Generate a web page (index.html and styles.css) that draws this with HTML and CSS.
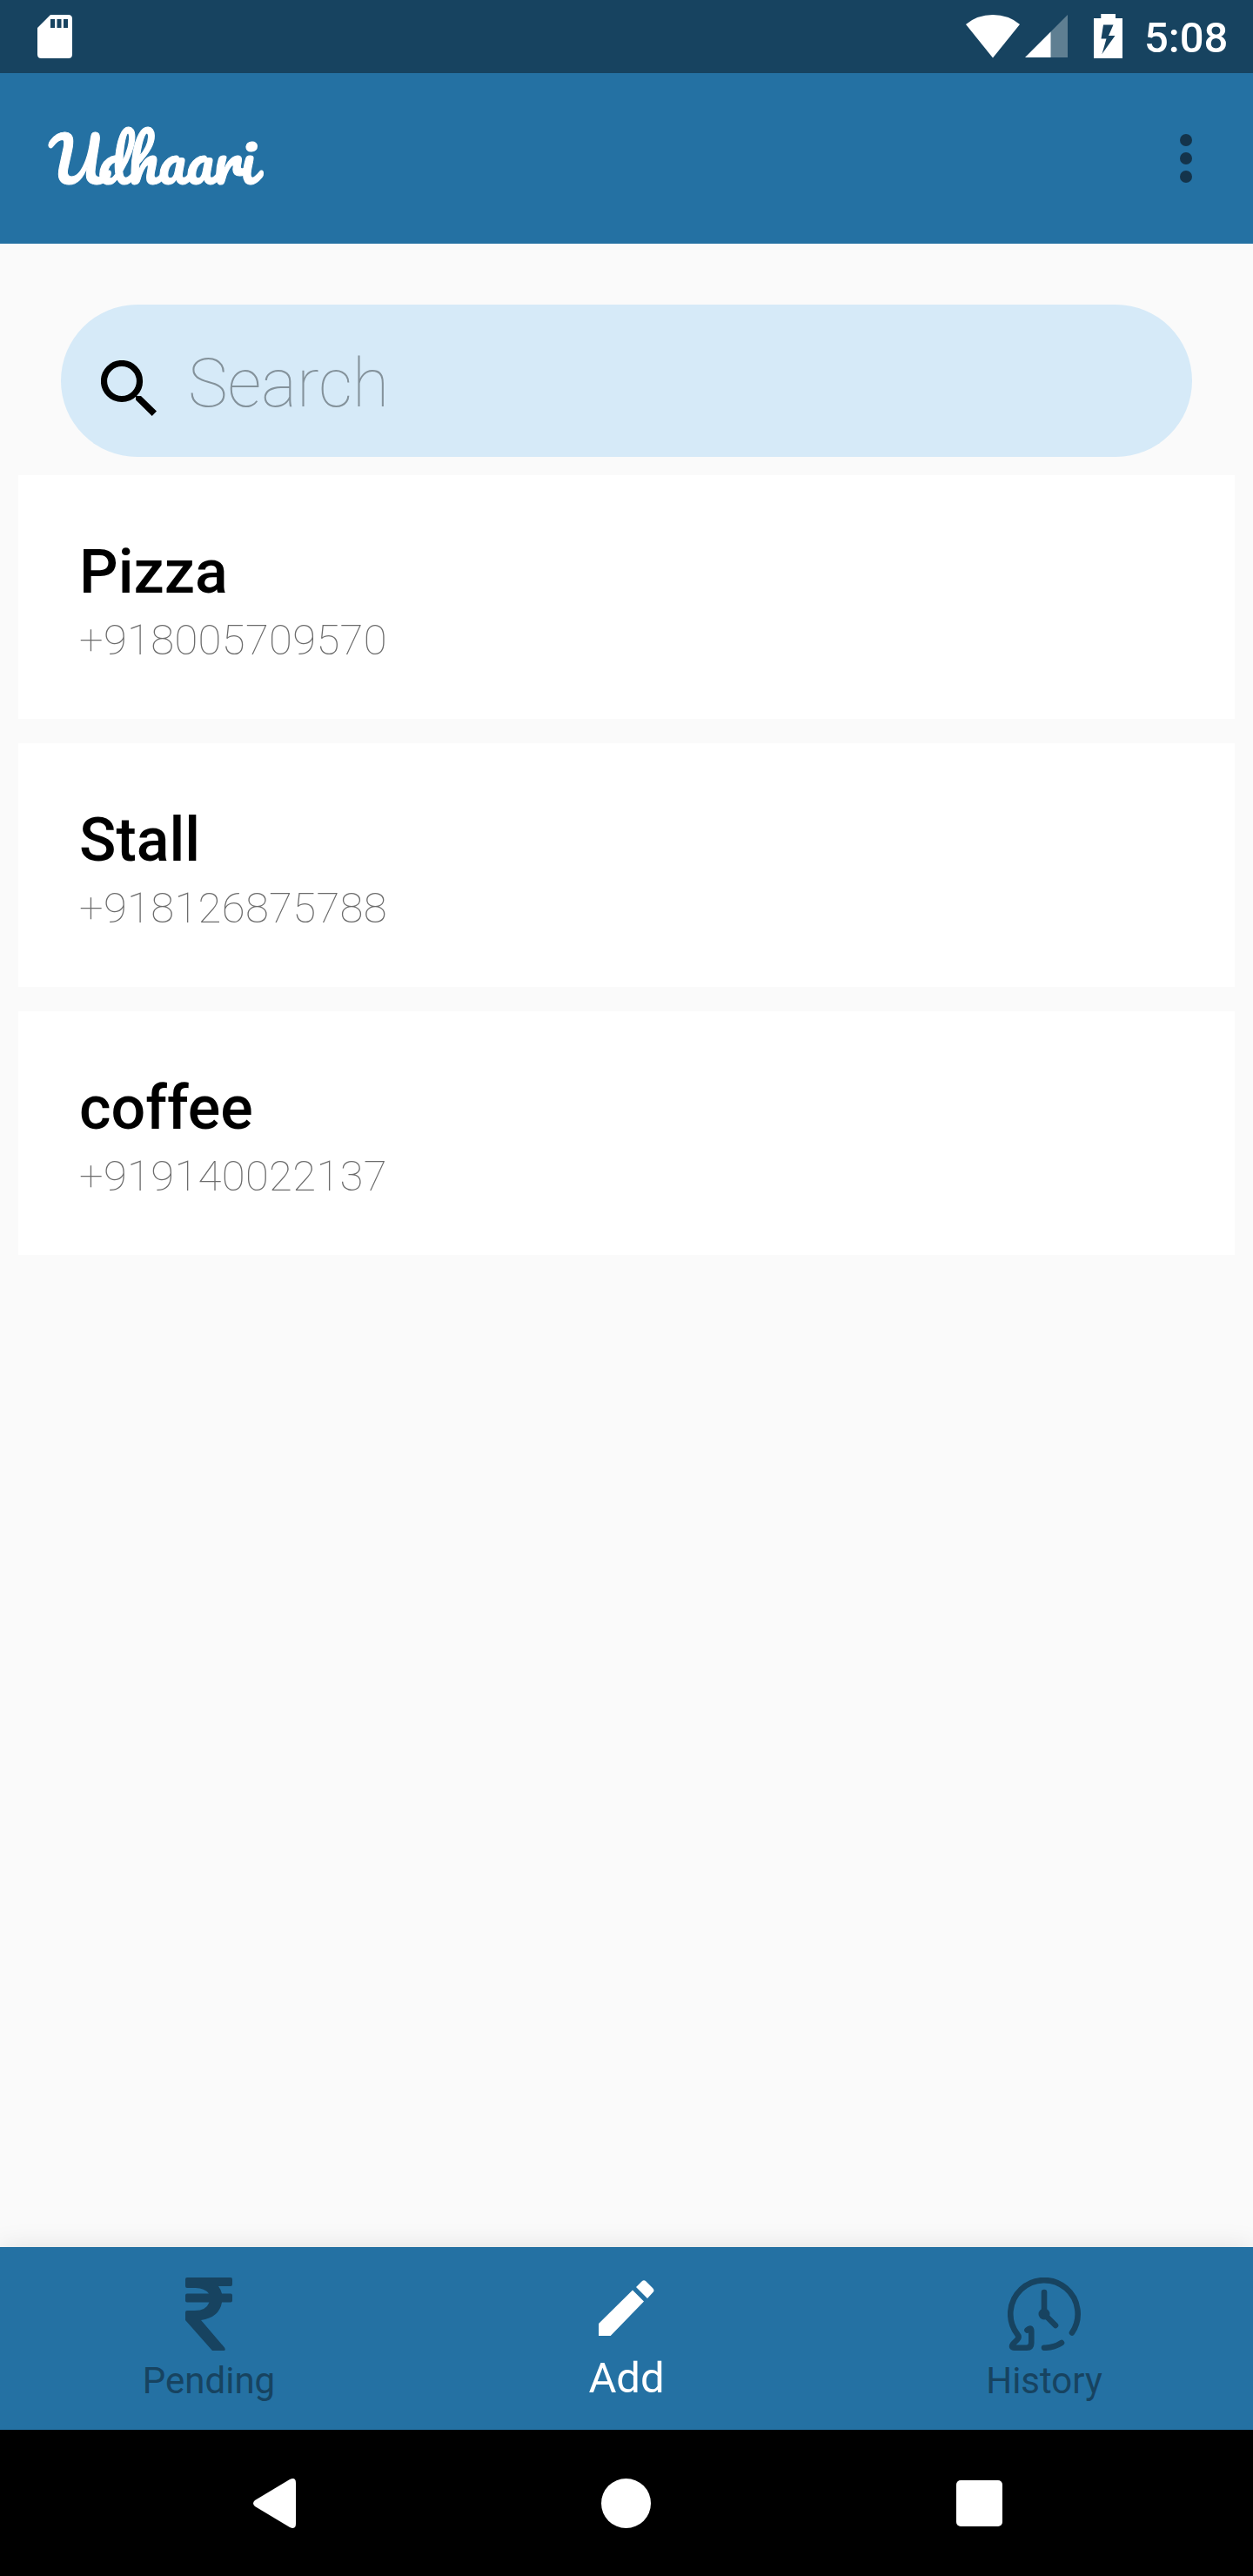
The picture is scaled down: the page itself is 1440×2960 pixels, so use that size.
FILE: index.html
```html
<!DOCTYPE html>
<html lang="en">
<head>
<meta charset="utf-8">
<title>Udhaari</title>
<link rel="stylesheet" href="styles.css">
</head>
<body>
<div class="status">
  <svg class="sd" width="40" height="50" viewBox="0 0 40 50"><path fill="#fff" fill-rule="evenodd" d="M15 0H35.500Q40 0 40 4.500V45.500Q40 50 35.500 50H4.500Q0 50 0 45.500V15ZM15 5V15H20V5ZM22.500 5V15H27.500V5ZM30 5V15H35V5Z"/></svg>
  <svg class="wifi" width="62" height="50" viewBox="0 0 62 50"><path fill="#fff" d="M0 11Q13 0 31 0T62 11L31 49.500Z"/></svg>
  <svg class="signal" width="49" height="49" viewBox="0 0 49 49"><path fill="#5f7f92" d="M49 0V49H29V20Z"/><path fill="#fff" d="M29.500 19.500V49H0Z"/></svg>
  <svg class="battery" width="33" height="51" viewBox="0 0 33 51"><path fill="#fff" fill-rule="evenodd" d="M8.300 0H25V5H33V51H0V5H8.300ZM11 12.500L8.500 28.500H14.500L9.500 46L24.500 25H17L22.500 12.500Z"/></svg>
  <span class="time">5:08</span>
</div>
<header class="appbar">
  <h1 class="brand"><span>U</span>dhaari</h1>
  <div class="more"><i></i><i></i><i></i></div>
</header>
<main>
  <div class="search">
    <svg width="64" height="64" viewBox="0 0 64 64"><circle cx="24" cy="24" r="20.500" fill="none" stroke="#000" stroke-width="7.200"/><path d="M40 41H46L64 58.500L58.700 64L40 45.500Z"/></svg>
    <span>Search</span>
  </div>
  <section class="card"><h2>Pizza</h2><p>+918005709570</p></section>
  <section class="card"><h2>Stall</h2><p>+918126875788</p></section>
  <section class="card"><h2>coffee</h2><p>+919140022137</p></section>
</main>
<nav class="tabs">
  <div class="tab">
    <svg width="54" height="84" viewBox="0 0 54 84"><path fill="#174360" d="M2 0H52Q54 0 54 2V8Q54 10 52 10H38Q41 14 42 18.500H52Q54 18.500 54 20.500V26.500Q54 28.500 52 28.500H42Q39 46 18 49L45 80.500Q47 84 44 84H31L0 49V40Q0 38 2 38H11Q24 38 27.500 28.500H2Q0 28.500 0 26.500V20.500Q0 18.500 2 18.500H27Q22 12 12 12H2Q0 12 0 10V2Q0 0 2 0Z"/></svg>
    <span>Pending</span>
  </div>
  <div class="tab active">
    <svg width="64" height="64" viewBox="0 0 64 64"><path fill="#fff" d="M0 50L39 11.500L52 24.500L13.700 64H0ZM43 8L49 2Q51.500 -1 54.500 1.500L62 9Q65 12 62 14.500L56 21Z"/></svg>
    <span>Add</span>
  </div>
  <div class="tab">
    <svg width="84" height="84" viewBox="0 0 84 84" fill="none" stroke="#174360" stroke-width="6.600" stroke-linecap="round" stroke-linejoin="round"><path d="M74 63.500A38.700 38.700 0 1 0 11 65Q14 68.500 11 71.500L6.500 76Q3 80.700 8 80.700H22Q27.300 80.700 27.300 75V62Q27.300 56 22.500 60.500M42 80.700Q53 81 62 75M42 17V42L55 55"/><circle cx="42" cy="42" r="6.500" fill="#174360" stroke="none"/></svg>
    <span>History</span>
  </div>
</nav>
<footer class="sysnav">
  <svg class="back" width="49" height="57" viewBox="0 0 49 57"><path fill="#fff" d="M2 25L42 1Q49 -2 49 5V52Q49 59 42 56L2 32Q-2 28.500 2 25Z"/></svg>
  <div class="home"></div>
  <div class="recent"></div>
</footer>
</body>
</html>
```
FILE: styles.css
```css
* { box-sizing: border-box; margin: 0; padding: 0; }
body {
  width: 1440px; height: 2960px;
  display: flex; flex-direction: column;
  background: #fafafa; color: #000;
  font-family: Roboto, sans-serif;
}
svg { display: block; flex: none; }
.status { height: 84px; flex: none; display: flex; align-items: flex-start; background: #174360; padding-left: 43px; }
.sd { margin-top: 17px; }
.wifi { margin: 17px 0 0 1027px; }
.signal { margin: 17px 0 0 6px; }
.battery { margin: 16px 0 0 30px; }
.time { margin: 15px 0 0 25px; color: #fff; font-size: 49px; line-height: 58px; font-weight: 500; }
.appbar { height: 196px; flex: none; display: flex; justify-content: space-between; background: #2471a3; padding: 28px 70px 0 56px; }
.brand { font-family: Pacifico, cursive; font-weight: 400; font-size: 70px; line-height: 142px; letter-spacing: -1px; color: #fff; -webkit-text-stroke: 1px #fff; }
.brand span { letter-spacing: -6px; }
.more { display: flex; flex-direction: column; gap: 7px; padding-top: 42px; }
.more i { width: 14px; height: 14px; border-radius: 50%; background: #14344b; }
main { flex: 1; padding: 70px 21px 0; display: flex; flex-direction: column; gap: 28px; }
.search {
  height: 175px; margin: 0 49px -7px; border-radius: 88px;
  background: #d6eaf8; display: flex; align-items: flex-start; padding: 64px 0 0 46px;
}
.search span { margin: -18px 0 0 36px; font-size: 77px; line-height: 90px; font-weight: 100; color: #84929b; }
.card { height: 280px; background: #fff; padding: 70px; }
.card h2 { font-size: 70px; line-height: 82px; font-weight: 500; }
.card p { margin-top: 9px; font-size: 49px; line-height: 58px; font-weight: 100; letter-spacing: .35px; color: #6c6c6c; }
.tabs { height: 210px; flex: none; display: flex; background: #2471a3; box-shadow: 0 0 28px rgba(0, 0, 0, .1); }
.tab { flex: 1; display: flex; flex-direction: column; align-items: center; padding-top: 35px; color: #174360; }
.tab span { margin-top: 10px; font-size: 42px; line-height: 50px; }
.tab.active { padding-top: 38px; color: #fff; }
.tab.active span { margin-top: 20px; font-size: 49px; line-height: 58px; }
.sysnav { height: 168px; flex: none; display: flex; justify-content: space-between; align-items: center; background: #000; padding: 0 288px 0 291px; }
.home { width: 57px; height: 57px; border-radius: 50%; background: #fff; }
.recent { width: 53px; height: 53px; border-radius: 5px; background: #fff; }
```
